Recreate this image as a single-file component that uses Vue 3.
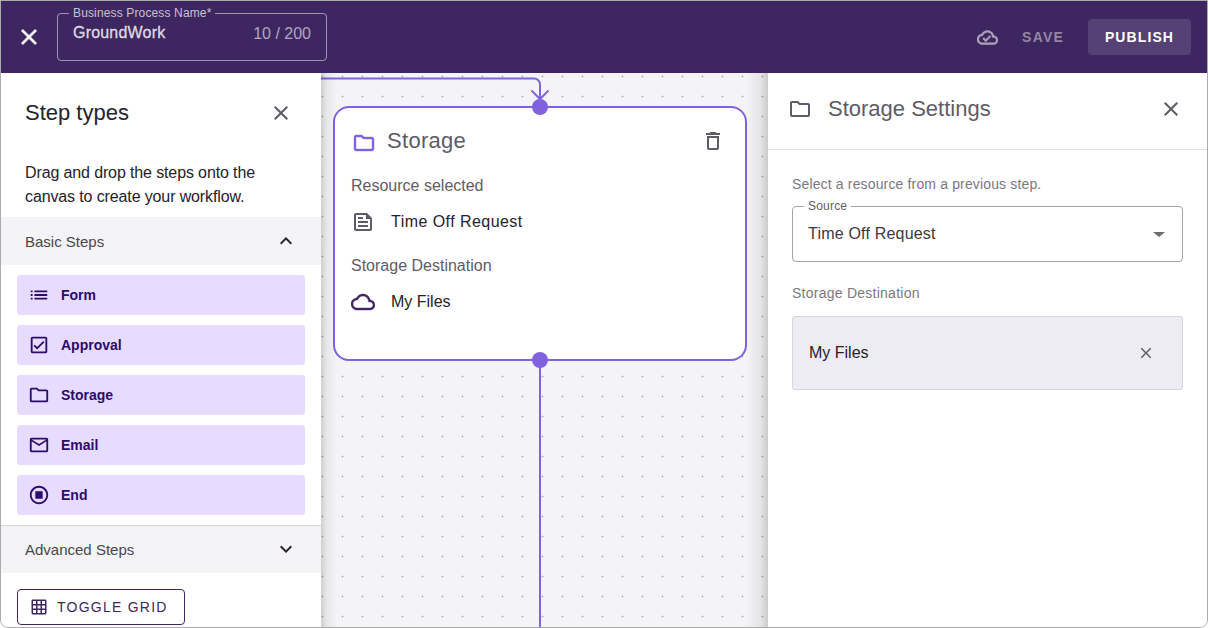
<script setup>
const basicSteps = [
  { label: 'Form', icon: 'list' },
  { label: 'Approval', icon: 'check' },
  { label: 'Storage', icon: 'folder' },
  { label: 'Email', icon: 'mail' },
  { label: 'End', icon: 'stop' }
]

const icons = {
  list: 'M3 13h2v-2H3v2zm0 4h2v-2H3v2zm0-8h2V7H3v2zm4 4h14v-2H7v2zm0 4h14v-2H7v2zM7 7v2h14V7H7z',
  check: 'M19 3H5c-1.1 0-2 .9-2 2v14c0 1.1.9 2 2 2h14c1.1 0 2-.9 2-2V5c0-1.1-.9-2-2-2zm0 16H5V5h14v14zM17.99 9l-1.41-1.42-6.59 6.59-2.58-2.57-1.42 1.41 4 3.99z',
  folder: 'M9.17 6l2 2H20v10H4V6h5.17M10 4H4c-1.1 0-1.99.9-1.99 2L2 18c0 1.1.9 2 2 2h16c1.1 0 2-.9 2-2V8c0-1.1-.9-2-2-2h-8l-2-2z',
  mail: 'M22 6c0-1.1-.9-2-2-2H4c-1.1 0-2 .9-2 2v12c0 1.1.9 2 2 2h16c1.1 0 2-.9 2-2V6zm-2 0l-8 5-8-5h16zm0 12H4V8l8 5 8-5v10z',
  stop: 'M12 2C6.48 2 2 6.48 2 12s4.48 10 10 10 10-4.48 10-10S17.52 2 12 2zm0 18c-4.42 0-8-3.58-8-8s3.58-8 8-8 8 3.58 8 8-3.58 8-8 8zm-4-12h8v8H8z',
  close: 'M19 6.41L17.59 5 12 10.59 6.41 5 5 6.41 10.59 12 5 17.59 6.41 19 12 13.41 17.59 19 19 17.59 13.41 12z',
  up: 'M7.41 15.41L12 10.83l4.59 4.58L18 14l-6-6-6 6z',
  down: 'M7.41 8.59L12 13.17l4.59-4.58L18 10l-6 6-6-6z',
  grid: 'M20 2H4c-1.1 0-2 .9-2 2v16c0 1.1.9 2 2 2h16c1.1 0 2-.9 2-2V4c0-1.1-.9-2-2-2zM8 20H4v-4h4v4zm0-6H4v-4h4v4zm0-6H4V4h4v4zm6 12h-4v-4h4v4zm0-6h-4v-4h4v4zm0-6h-4V4h4v4zm6 12h-4v-4h4v4zm0-6h-4v-4h4v4zm0-6h-4V4h4v4z',
  trash: 'M16 9v10H8V9h8m-1.5-6h-5l-1 1H5v2h14V4h-3.5l-1-1zM18 7H6v12c0 1.1.9 2 2 2h8c1.1 0 2-.9 2-2V7z',
  feed: 'M16 3H5c-1.1 0-2 .9-2 2v14c0 1.1.9 2 2 2h14c1.1 0 2-.9 2-2V8l-5-5zm3 16H5V5h10v4h4v10zM7 17h10v-2H7v2zm5-10H7v2h5V7zm-5 6h10v-2H7v2z',
  cloud: 'M12 6c2.62 0 4.88 1.86 5.39 4.43l.3 1.5 1.53.11C20.78 12.14 22 13.45 22 15c0 1.65-1.35 3-3 3H6c-2.21 0-4-1.79-4-4 0-2.05 1.53-3.76 3.56-3.97l1.07-.11.5-.95C8.08 7.14 9.94 6 12 6m0-2C9.11 4 6.6 5.64 5.35 8.04 2.34 8.36 0 10.91 0 14c0 3.31 2.69 6 6 6h13c2.76 0 5-2.24 5-5 0-2.64-2.05-4.78-4.65-4.96C18.67 6.59 15.64 4 12 4z',
  cloudDone: 'M19.35 10.04C18.67 6.59 15.64 4 12 4 9.11 4 6.6 5.64 5.35 8.04 2.34 8.36 0 10.91 0 14c0 3.31 2.69 6 6 6h13c2.76 0 5-2.24 5-5 0-2.64-2.05-4.78-4.65-4.96zM19 18H6c-2.21 0-4-1.79-4-4 0-2.05 1.53-3.76 3.56-3.97l1.07-.11.5-.95C8.08 7.14 9.94 6 12 6c2.62 0 4.88 1.86 5.39 4.43l.3 1.5 1.53.11c1.56.1 2.78 1.41 2.78 2.96 0 1.65-1.35 3-3 3zm-9-3.82l-2.09-2.09L6.5 13.5 10 17l6.01-6.01-1.41-1.41z'
}
</script>

<template>
  <div class="app">
    <header class="topbar">
      <svg class="top-close" viewBox="0 0 24 24" width="26" height="26"><path :d="icons.close" /></svg>
      <div class="name-field">
        <span class="name-label">Business Process Name*</span>
        <span class="name-value">GroundWork</span>
        <span class="name-count">10 / 200</span>
      </div>
      <div class="top-actions">
        <svg class="saved-icon" viewBox="0 0 24 24" width="21" height="21"><path :d="icons.cloudDone" /></svg>
        <span class="save">SAVE</span>
        <button class="publish">PUBLISH</button>
      </div>
    </header>

    <div class="main">
      <aside class="steps">
        <div class="steps-head">
          <h2>Step types</h2>
          <svg class="grey-icon" viewBox="0 0 24 24" width="24" height="24"><path :d="icons.close" /></svg>
        </div>
        <p class="steps-help">Drag and drop the steps onto the canvas to create your workflow.</p>
        <div class="accordion">
          <span>Basic Steps</span>
          <svg viewBox="0 0 24 24" width="24" height="24"><path :d="icons.up" /></svg>
        </div>
        <div class="step-list">
          <div v-for="step in basicSteps" :key="step.label" class="step-item">
            <svg viewBox="0 0 24 24" width="22" height="22"><path :d="icons[step.icon]" /></svg>
            <span>{{ step.label }}</span>
          </div>
        </div>
        <div class="accordion advanced">
          <span>Advanced Steps</span>
          <svg viewBox="0 0 24 24" width="24" height="24"><path :d="icons.down" /></svg>
        </div>
        <button class="toggle-grid">
          <svg viewBox="0 0 24 24" width="18" height="18"><path :d="icons.grid" /></svg>
          TOGGLE GRID
        </button>
      </aside>

      <section class="canvas">
        <svg class="wires" width="447" height="555" viewBox="0 0 447 555">
          <path d="M0 5.500H213a6 6 0 0 1 6 6V26M210.500 17.500L219 26L227.500 17.500M219 287V555" />
        </svg>
        <div class="node">
          <span class="port port-top"></span>
          <span class="port port-bottom"></span>
          <div class="node-head">
            <svg class="node-folder" viewBox="0 0 24 24" width="24" height="24"><path :d="icons.folder" /></svg>
            <span class="node-title">Storage</span>
            <svg class="grey-icon node-trash" viewBox="0 0 24 24" width="24" height="24"><path :d="icons.trash" /></svg>
          </div>
          <div class="node-label">Resource selected</div>
          <div class="node-row">
            <svg class="grey-icon" viewBox="0 0 24 24" width="24" height="24"><path :d="icons.feed" /></svg>
            <span class="node-resource">Time Off Request</span>
          </div>
          <div class="node-label second">Storage Destination</div>
          <div class="node-row">
            <svg class="purple-icon" viewBox="0 0 24 24" width="24" height="24"><path :d="icons.cloud" /></svg>
            <span>My Files</span>
          </div>
        </div>
      </section>

      <aside class="settings">
        <div class="settings-head">
          <svg class="grey-icon" viewBox="0 0 24 24" width="24" height="24"><path :d="icons.folder" /></svg>
          <h2>Storage Settings</h2>
          <svg class="grey-icon settings-close" viewBox="0 0 24 24" width="24" height="24"><path :d="icons.close" /></svg>
        </div>
        <div class="settings-body">
          <p class="hint">Select a resource from a previous step.</p>
          <div class="select">
            <span class="select-label">Source</span>
            <span class="select-value">Time Off Request</span>
            <span class="caret"></span>
          </div>
          <div class="dest-label">Storage Destination</div>
          <div class="dest-box">
            <span>My Files</span>
            <svg class="grey-icon" viewBox="0 0 24 24" width="18" height="18"><path :d="icons.close" /></svg>
          </div>
        </div>
      </aside>
    </div>
  </div>
</template>

<style scoped>
.app {
  width: 1208px;
  height: 628px;
  box-sizing: border-box;
  border: 1px solid #ababab;
  border-bottom-left-radius: 8px;
  border-bottom-right-radius: 8px;
  overflow: hidden;
  display: flex;
  flex-direction: column;
  background: #fff;
  font-family: "Liberation Sans", Arial, sans-serif;
  color: #26222c;
}

h2 {
  margin: 0;
  font-weight: 400;
  font-size: 22px;
}

svg {
  flex: none;
  display: block;
  fill: currentColor;
}

.grey-icon {
  color: #5f5b66;
}

.purple-icon {
  color: #3e2760;
  stroke: currentColor;
  stroke-width: 0.4;
}

.topbar {
  height: 72px;
  flex: none;
  box-sizing: border-box;
  background: #3e2760;
  display: flex;
  align-items: center;
  padding: 0 16px 0 15px;
}

.top-close {
  color: #fff;
  margin-right: 15px;
  stroke: #fff;
  stroke-width: 0.6;
}

.name-field {
  position: relative;
  width: 270px;
  height: 48px;
  box-sizing: border-box;
  border: 1px solid rgba(255, 255, 255, 0.5);
  border-radius: 4px;
  display: flex;
  justify-content: space-between;
  padding: 9px 15px 0;
  font-size: 16px;
  line-height: 19px;
  color: rgba(255, 255, 255, 0.8);
}

.name-value {
  letter-spacing: 0.2px;
  -webkit-text-stroke: 0.3px rgba(255, 255, 255, 0.8);
}

.name-label {
  position: absolute;
  left: 11px;
  top: -7px;
  padding: 0 4px;
  background: #3e2760;
  font-size: 12px;
  line-height: 13px;
  letter-spacing: 0.14px;
  color: rgba(255, 255, 255, 0.72);
}

.name-count {
  margin-top: 1px;
  color: rgba(255, 255, 255, 0.6);
}

.top-actions {
  margin-left: auto;
  display: flex;
  align-items: center;
}

.saved-icon {
  color: rgba(255, 255, 255, 0.55);
  stroke: currentColor;
  stroke-width: 0.5;
}

.save {
  margin-left: 24px;
  font-size: 14px;
  font-weight: 700;
  letter-spacing: 1.2px;
  color: rgba(255, 255, 255, 0.45);
}

.publish {
  margin-left: 24px;
  width: 103px;
  height: 36px;
  border: none;
  border-radius: 4px;
  background: rgba(255, 255, 255, 0.12);
  color: #fff;
  font: 700 14px "Liberation Sans", Arial, sans-serif;
  letter-spacing: 1.1px;
  padding: 0;
}

.main {
  flex: 1;
  min-height: 0;
  display: flex;
}

.steps {
  width: 320px;
  flex: none;
  background: #fff;
  position: relative;
  z-index: 2;
  display: flex;
  flex-direction: column;
}

.steps-head {
  height: 80px;
  flex: none;
  display: flex;
  align-items: center;
  justify-content: space-between;
  padding: 0 28px 0 24px;
}

.steps-help {
  margin: 0;
  padding: 8px 24px 0;
  height: 56px;
  box-sizing: content-box;
  font-size: 16px;
  line-height: 24px;
  letter-spacing: -0.125px;
  flex: none;
}

.accordion {
  height: 48px;
  flex: none;
  box-sizing: border-box;
  background: #f4f4f6;
  display: flex;
  align-items: center;
  justify-content: space-between;
  padding: 0 23px 0 24px;
  font-size: 15px;
  color: #4a4651;
}

.accordion svg {
  color: #2c2433;
}

.step-list {
  padding: 10px 16px;
  display: flex;
  flex-direction: column;
  gap: 10px;
}

.step-item {
  height: 40px;
  border-radius: 3px;
  background: #e7dcff;
  display: flex;
  align-items: center;
  gap: 11px;
  padding-left: 11px;
  font-size: 14px;
  font-weight: 700;
  color: #2e0a6b;
}

.advanced {
  border-top: 1px solid #d6d6d8;
  padding-bottom: 1px;
}

.toggle-grid {
  margin: 16px 0 0 16px;
  width: 168px;
  height: 36px;
  box-sizing: border-box;
  background: #fff;
  border: 1px solid #3e2760;
  border-radius: 4px;
  display: flex;
  align-items: center;
  gap: 9px;
  padding: 0 0 0 12px;
  font: 400 14px "Liberation Sans", Arial, sans-serif;
  letter-spacing: 1.25px;
  color: #3e2760;
}

.canvas {
  flex: 1;
  position: relative;
  overflow: hidden;
  background-color: #f4f4f6;
  background-image: radial-gradient(circle at 1.5px 1.5px, #a8a8ac 0.8px, transparent 1.1px);
  background-size: 20px 20px;
  background-position: 0 2px;
}

.canvas::before {
  content: "";
  position: absolute;
  inset: 0;
  z-index: 3;
  pointer-events: none;
  background:
    linear-gradient(to right, rgba(0, 0, 0, 0.15), rgba(0, 0, 0, 0.05) 6px, transparent 16px) left / 16px 100% no-repeat,
    linear-gradient(to left, rgba(0, 0, 0, 0.17), rgba(0, 0, 0, 0.06) 8px, transparent 22px) right / 22px 100% no-repeat;
}

.wires {
  position: absolute;
  left: 0;
  top: 0;
  fill: none;
}

.wires path {
  fill: none;
  stroke: #7f63dd;
  stroke-width: 2;
}

.node {
  position: absolute;
  left: 12px;
  top: 33px;
  width: 414px;
  height: 255px;
  box-sizing: border-box;
  background: #fff;
  border: 2px solid #7f63dd;
  border-radius: 16px;
  padding: 0 16px;
}

.port {
  position: absolute;
  width: 16px;
  height: 16px;
  border-radius: 50%;
  background: #7f63dd;
  left: 197px;
}

.port-top {
  top: -9px;
}

.port-bottom {
  bottom: -9px;
}

.node-head {
  height: 66px;
  display: flex;
  align-items: center;
  padding-left: 1px;
}

.node-folder {
  color: #7f63dd;
  margin: 3px 11px 0 0;
  stroke: currentColor;
  stroke-width: 0.4;
}

.node-title {
  font-size: 22px;
  letter-spacing: 0.3px;
  color: #5f5b66;
}

.node-trash {
  margin-left: auto;
  margin-right: 4px;
}

.node-label {
  font-size: 16px;
  line-height: 24px;
  color: #5f5b66;
}

.node-label.second {
  margin-top: 8px;
}

.node-row {
  display: flex;
  align-items: center;
  gap: 16px;
  height: 48px;
  font-size: 16px;
}

.node-resource {
  letter-spacing: 0.45px;
}

.settings {
  width: 439px;
  flex: none;
  position: relative;
  z-index: 2;
  background: #fff;
}

.settings-head {
  height: 77px;
  box-sizing: border-box;
  border-bottom: 1px solid #e0e0e2;
  display: flex;
  align-items: center;
  gap: 16px;
  padding: 0 24px 4px 20px;
}

.settings-head h2 {
  color: #5f5b66;
}

.settings-close {
  margin-left: auto;
}

.settings-body {
  padding: 25px 24px 0;
}

.hint {
  margin: 0;
  font-size: 14px;
  line-height: 18px;
  letter-spacing: 0.15px;
  color: #7b7882;
}

.select {
  position: relative;
  margin-top: 13px;
  height: 56px;
  box-sizing: border-box;
  border: 1px solid #a3a3a3;
  border-radius: 4px;
  display: flex;
  align-items: center;
  padding: 0 15px;
  font-size: 16px;
  color: #3c3842;
}

.select-value {
  letter-spacing: 0.2px;
}

.select-label {
  position: absolute;
  left: 11px;
  top: -7px;
  padding: 0 4px;
  background: #fff;
  font-size: 12px;
  line-height: 13px;
  letter-spacing: 0.2px;
  color: #5f5b66;
}

.caret {
  margin-left: auto;
  margin-right: 2px;
  border-left: 6px solid transparent;
  border-right: 6px solid transparent;
  border-top: 5px solid #6e6b74;
}

.dest-label {
  margin-top: 22px;
  font-size: 14px;
  line-height: 18px;
  letter-spacing: 0.25px;
  color: #7b7882;
}

.dest-box {
  margin-top: 14px;
  height: 74px;
  box-sizing: border-box;
  border: 1px solid #d6d5dc;
  border-radius: 3px;
  background: #edecf2;
  display: flex;
  align-items: center;
  justify-content: space-between;
  padding: 0 27px 0 16px;
  font-size: 16px;
}
</style>

<style>
html,
body {
  margin: 0;
  background: #fff;
}
</style>
